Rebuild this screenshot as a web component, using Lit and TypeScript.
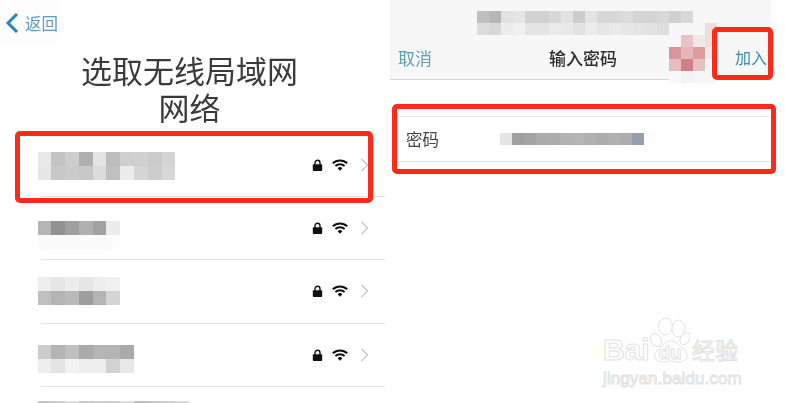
import { LitElement, css, html } from 'lit';
import { customElement } from 'lit/decorators.js';

type Network = {
  cells: string[][];
  top: number;
};

const networks: Network[] = [
  {
    top: 18,
    cells: [
      ['#e8e8e8', '#c4c4c4', '#cdcdcd', '#b0b0b0', '#e4e4e4', '#bdbdbd', '#cfcfcf', '#d0d0d0', '#cbcbcb', '#d4d4d4'],
      ['#e6e6e6', '#c8c8c8', '#cbcbcb', '#c8c8c8', '#dcdcdc', '#c0c0c0', '#ececec', '#d6d6d6', '#cdcdcd', '#d8d8d8'],
    ],
  },
  {
    top: 24,
    cells: [
      ['#b4b4b4', '#929292', '#a0a0a0', '#b0b0b0', '#a2a2a2', '#ececec'],
      ['#fbfbfb', '#fafafa', '#fafafa', '#fafafa', '#fafafa', '#fcfcfc'],
    ],
  },
  {
    top: 17,
    cells: [
      ['#eeeeee', '#e6e6e6', '#eeeeee', '#e6e6e6', '#eeeeee', '#f0f0f0'],
      ['#c0c0c0', '#b4b4b4', '#bababa', '#9e9e9e', '#b4b4b4', '#d4d4d4'],
    ],
  },
  {
    top: 21,
    cells: [
      ['#cccccc', '#b4b4b4', '#c0c0c0', '#aaaaaa', '#b4b4b4', '#b4b4b4', '#aaaaaa'],
      ['#eeeeee', '#e4e4e4', '#f2f2f2', '#eeeeee', '#eeeeee', '#d2d2d2', '#e8e8e8'],
    ],
  },
  {
    top: 14,
    cells: [['#c4c4c4', '#cccccc', '#e0e0e0', '#c8c8c8', '#d0d0d0', '#cccccc', '#e0e0e0', '#c0c0c0', '#c8c8c8', '#d0d0d0', '#d8d8d8']],
  },
];

const headerCells = [
  ['#c0c0c0', '#b6b6b6', '#e2e2e2', '#e6e6e6', '#d2d2d2', '#d2d2d2', '#d8d8d8', '#e2e2e2', '#cccccc', '#e4e4e4', '#d8d8d8', '#d8d8d8', '#dcdcdc', '#d4d4d4', '#d4d4d4', '#d8d8d8', '#d0d0d0', '#d8d8d8'],
  ['#dcdcdc', '#d8d8d8', '#ececec', '#f0f0f0', '#e4e4e4', '#e4e4e4', '#eaeaea', '#e8e8e8', '#e2e2e2', '#ececec', '#e6e6e6', '#eaeaea', '#e6e6e6', '#e4e4e4', '#e2e2e2', '#dedede', '#d4d4d4', '#e0e0e0'],
];

const pinkCells = [
  ['#f7f7f7', '#f7f7f7', '#f7f7f7', '#f0dcdc'],
  ['#f7f7f7', '#e8c4c8', '#f0e8e8', '#f0dcdc'],
  ['#d8959b', '#e5b5b9', '#dd9ca0', '#f4e8e8'],
  ['#e8bcc0', '#d08085', '#e8c0c4', '#f7f7f7'],
  ['#f8f8f8', '#f3f3f3', '#f7f7f7', '#f7f7f7'],
];

const mosaic = (rows: string[][], size: number, height = size) => html`
  <div class="mosaic">
    ${rows.map(
      (row) => html`
        <div class="mosaic-row">
          ${row.map((c) => html`<i style="width:${size}px;height:${height}px;background:${c}"></i>`)}
        </div>
      `
    )}
  </div>
`;

const statusIcons = html`
  <div class="status">
    <svg class="lock" width="11" height="12" viewBox="0 0 11 12">
      <path d="M3 6V3.8a2.5 2.5 0 0 1 5 0V6" fill="none" stroke="#111" stroke-width="1.4" />
      <rect x="0.8" y="5.3" width="9.4" height="6.7" rx="1" fill="#111" />
    </svg>
    <svg class="wifi" width="16" height="12" viewBox="0 0 16 12">
      <path d="M0.8 4.3a10.4 10.4 0 0 1 14.4 0" fill="none" stroke="#111" stroke-width="2" />
      <path d="M3.4 7a6.6 6.6 0 0 1 9.2 0" fill="none" stroke="#111" stroke-width="2" />
      <path d="M5.6 9.3a3.4 3.4 0 0 1 4.8 0L8 11.8z" fill="#111" />
    </svg>
    <svg width="9" height="14" viewBox="0 0 9 14">
      <path d="M1.5 1l6 6-6 6" fill="none" stroke="#c6c6c6" stroke-width="1.3" />
    </svg>
  </div>
`;

@customElement('app-root')
export class AppRoot extends LitElement {
  static styles = css`
    * {
      margin: 0;
      padding: 0;
      box-sizing: border-box;
    }

    :host {
      display: block;
      position: relative;
      width: 785px;
      height: 403px;
      overflow: hidden;
      background: #fff;
      font-family: 'Liberation Sans', 'Noto Sans CJK SC', sans-serif;
    }

    main {
      display: grid;
      grid-template-columns: 390px 395px;
      height: 403px;
      filter: blur(0.4px);
    }

    .mosaic-row {
      display: flex;
    }

    .mosaic i {
      display: block;
      flex: none;
    }

    .back {
      display: flex;
      align-items: center;
      gap: 6px;
      width: 62px;
      height: 45px;
      padding-left: 5px;
      background: #fcfdfc;
      color: #5d9ec4;
      font-size: 16.5px;
    }

    h1 {
      margin-top: 9px;
      height: 80px;
      text-align: center;
      font-size: 31px;
      line-height: 37px;
      font-weight: 400;
      color: #3a3a3a;
      width: 379px;
    }

    .rows {
      height: 269px;
      overflow: hidden;
    }

    .row {
      display: flex;
      height: 63px;
      margin-left: 41px;
      width: 344px;
      border-bottom: 1px solid #e4e4e4;
    }

    .row:nth-child(3) {
      height: 64px;
    }

    .row .mosaic {
      margin-left: -3.5px;
      align-self: flex-start;
    }

    .status {
      display: flex;
      align-items: center;
      margin-left: auto;
      margin-right: 16px;
      height: 62px;
    }

    .lock {
      margin-right: 9px;
    }

    .wifi {
      margin-right: 12px;
    }

    .right {
      display: flex;
      flex-direction: column;
    }

    .nav {
      width: 381px;
      height: 80px;
      background: #f7f7f7;
      border-bottom: 1px solid #d6d6d6;
      padding-top: 11px;
    }

    .nav .mosaic {
      margin-left: 87px;
    }

    .nav-row {
      display: flex;
      align-items: center;
      height: 44px;
      padding: 0 4px 0 8px;
      font-size: 17px;
      color: #5f9fb4;
    }

    .nav-row strong {
      margin-left: 117px;
      font-size: 17px;
      font-weight: 500;
      color: #2c2c2c;
    }

    .nav-row .join {
      margin-left: auto;
      font-size: 16px;
      color: #3f8eb0;
    }

    .field {
      display: flex;
      align-items: center;
      width: 374px;
      height: 46px;
      margin: 36px 0 0 7px;
      padding-left: 9px;
      border-top: 1px solid #e8e8e8;
      border-bottom: 1px solid #e4e4e4;
      font-size: 16.5px;
      color: #444;
    }

    .field .mosaic {
      margin-left: 61px;
    }

    .pink {
      position: absolute;
      left: 669px;
      top: 23px;
    }

    .frame {
      position: absolute;
      border: 5px solid #ff2a1a;
      border-radius: 5px;
    }

    .frame-network {
      left: 15px;
      top: 131px;
      width: 358px;
      height: 72px;
    }

    .frame-join {
      left: 712px;
      top: 27px;
      width: 61px;
      height: 53px;
    }

    .frame-password {
      left: 392px;
      top: 104px;
      width: 384px;
      height: 70px;
    }

    .watermark {
      position: absolute;
      left: 603px;
      top: 317px;
      width: 160px;
      color: #fff;
      -webkit-text-stroke: 1px #e2e2e2;
    }

    .mark {
      display: flex;
      align-items: flex-end;
      height: 50px;
      white-space: nowrap;
    }

    .mark b {
      width: 45px;
      font-size: 30px;
      line-height: 34px;
    }

    .mark svg {
      flex: none;
      margin-bottom: 4px;
    }

    .mark span {
      flex: none;
      margin: 0 0 3px 2px;
      font-size: 23px;
      line-height: 26px;
    }

    .watermark p {
      margin-top: 3px;
      font-size: 17px;
      line-height: 18px;
      letter-spacing: 0.1px;
      white-space: nowrap;
    }
  `;

  render() {
    return html`
      <main>
        <section>
          <div class="back">
            <svg width="14" height="22" viewBox="0 0 14 22">
              <path d="M12 2L3 11l9 9" fill="none" stroke="#2f81bd" stroke-width="3" />
            </svg>
            <span>返回</span>
          </div>
          <h1>选取无线局域网<br />网络</h1>
          <div class="rows">
            ${networks.map(
              (n) => html`
                <div class="row">
                  <div class="mosaic-wrap" style="margin-top:${n.top}px">${mosaic(n.cells, 13.8)}</div>
                  ${n.cells.length > 1 ? statusIcons : ''}
                </div>
              `
            )}
          </div>
        </section>
        <section class="right">
          <header class="nav">
            ${mosaic(headerCells, 12)}
            <div class="nav-row">
              <span>取消</span>
              <strong>输入密码</strong>
              <span class="join">加入</span>
            </div>
          </header>
          <div class="field">
            <span>密码</span>
            ${mosaic(
              [
                ['#e4e4e4', '#a0a0a0', '#a4a4a4', '#aaaaaa', '#acacac', '#b2b2b2', '#b4b4b4', '#b0b0b0', '#acacac', '#b0b0b0', '#adadad', '#949eac'],
              ],
              12
            )}
          </div>
        </section>
      </main>
      <div class="pink">${mosaic(pinkCells, 12)}</div>
      <div class="frame frame-network"></div>
      <div class="frame frame-join"></div>
      <div class="frame frame-password"></div>
      <div class="watermark">
        <div class="mark">
          <b>Bai</b>
          <svg width="42" height="46" viewBox="0 0 42 46" fill="#fff" stroke="#e2e2e2" stroke-width="1">
            <ellipse cx="8" cy="23" rx="5" ry="7" transform="rotate(-30 8 23)" />
            <ellipse cx="17.5" cy="9.5" rx="7" ry="8.5" />
            <ellipse cx="30.5" cy="11.5" rx="6.5" ry="8.5" />
            <ellipse cx="37" cy="21.5" rx="4.5" ry="6.5" transform="rotate(30 37 21.5)" />
            <path d="M23 24c5 0 7 3 10 6 5 4 7 7 6 10-1 4-5 5-9 5-3 0-5-1-7-1s-4 1-7 1c-4 0-8-1-9-5-1-3 1-6 6-10 3-3 5-6 10-6z" />
            <text x="22" y="42" text-anchor="middle" font-size="19" font-weight="700" font-family="Liberation Sans, sans-serif">du</text>
          </svg>
          <span>经验</span>
        </div>
        <p>jingyan.baidu.com</p>
      </div>
    `;
  }
}
